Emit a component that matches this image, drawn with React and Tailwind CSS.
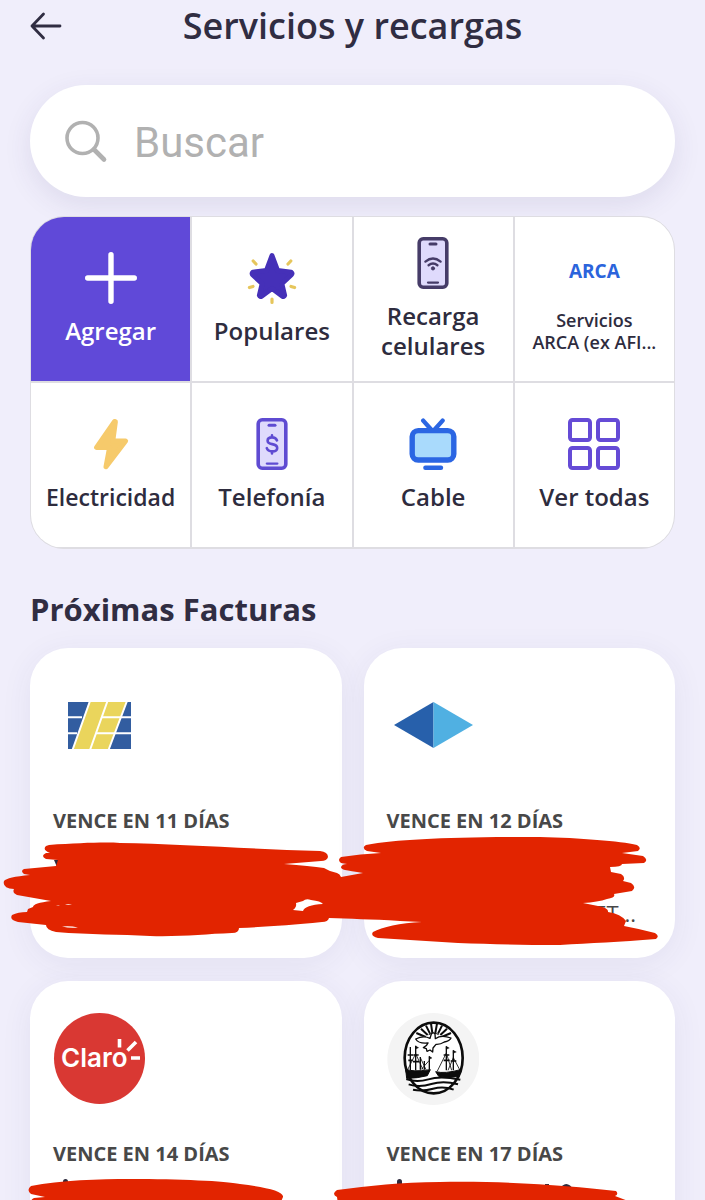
import React, { useState } from "react";

const PlusIcon = () => (
    <svg viewBox="0 0 52 52" className="size-[52px]" fill="none" stroke="#fff" strokeWidth="5.4" strokeLinecap="round">
        <path d="M26 2.7v46.6M2.7 26h46.6" />
    </svg>
);

const StarIcon = () => (
    <svg viewBox="0 0 52 52" className="size-[52px]">
        <path
            d="M26 3.5L31.6 18.6L45.2 20.2Q46.6 21.6 45.2 23L35.8 31.6L38.6 43.4Q38 45 36.4 44.2L26 36.6L15.6 44.2Q14 45 13.4 43.4L16.2 31.6L6.8 23Q5.4 21.6 6.8 20.2L20.4 18.6Z"
            fill="#4530b8"
            stroke="#4530b8"
            strokeWidth="5"
            strokeLinejoin="round"
        />
        <path
            d="M7.2 9l2.8 3M44.8 9l-2.8 3M3.4 35.6l3.6-1.2M48.6 35.6L45 34.4M26 47v3.4"
            fill="none"
            stroke="#e6c65c"
            strokeWidth="3.2"
            strokeLinecap="round"
        />
    </svg>
);

const PhoneWifiIcon = () => (
    <svg viewBox="0 0 52 52" className="size-[52px]" fill="none" stroke="#463c68" strokeLinecap="round">
        <rect x="12.2" y="1.8" width="27.6" height="48.4" rx="4" fill="#dfdafc" strokeWidth="3.6" />
        <path d="M23 7h6" strokeWidth="3" />
        <path d="M21 45.6h10" strokeWidth="2.2" />
        <path d="M18.4 24.6q7.6-6 15.2 0M21.6 28.2q4.4-3.6 8.8 0" strokeWidth="2.4" />
        <circle cx="26" cy="31.4" r="1.6" fill="#463c68" strokeWidth="1" />
    </svg>
);

const PhoneMoneyIcon = () => (
    <svg viewBox="0 0 52 52" className="size-[52px]" fill="none" stroke="#5f4bd2" strokeLinecap="round" strokeLinejoin="round">
        <rect x="12.2" y="1.8" width="27.6" height="48.4" rx="4" fill="#dfdafc" strokeWidth="3.6" />
        <path d="M23 7.2h6" strokeWidth="3" />
        <path d="M20.8 45.6h10.6" strokeWidth="2.2" />
        <path d="M31 22.4q-1.2-3-5-3-4.4 0-4.4 3.3 0 2.6 4.6 3.4 5 .8 5 3.8 0 3.5-5 3.5-4.4 0-5.4-3.2M26 17.4v2M26 33.4v2" strokeWidth="2.6" />
    </svg>
);

const BoltIcon = () => (
    <svg viewBox="0 0 52 52" className="size-[52px]">
        <path
            d="M29.6 3.4L11.6 29.4H24.6L21 48.8L40.6 23H27.8L30.4 3.6Z"
            fill="#f6ca6b"
            stroke="#f6ca6b"
            strokeWidth="5"
            strokeLinejoin="round"
        />
    </svg>
);

const TvIcon = () => (
    <svg viewBox="0 0 52 52" className="size-[52px]" fill="none" stroke="#2b66e3" strokeLinecap="round">
        <path d="M16.2 2.6l8.6 9.6M35.6 2.6L27 12.2" strokeWidth="4.4" />
        <rect x="5.2" y="12.6" width="41.6" height="29.4" rx="6" fill="#a9dafc" strokeWidth="5.4" />
        <path d="M18.4 49.8h15.6" strokeWidth="4.4" />
    </svg>
);

const SquaresIcon = () => (
    <svg viewBox="0 0 52 52" className="size-[52px]" fill="none" stroke="#654bd6" strokeWidth="4">
        <rect x="2" y="2" width="20" height="20" rx="2.5" />
        <rect x="30" y="2" width="20" height="20" rx="2.5" />
        <rect x="2" y="30" width="20" height="20" rx="2.5" />
        <rect x="30" y="30" width="20" height="20" rx="2.5" />
    </svg>
);

const ArcaLogo = () => (
    <span className="flex h-[52px] items-center text-[19px] font-bold text-[#2b64dc]">ARCA</span>
);

const StripesLogo = () => (
    <svg viewBox="0 0 92 92" className="size-[92px]">
        <rect x="15" y="22" width="63" height="47" fill="#325da0" />
        <path d="M36 22h38L56 69H20z" fill="#ead55c" />
        <path d="M15 37.3h14M15 53.3h9M49 37.3h30M43 53.3h36" stroke="#fff" strokeWidth="2" />
        <path
            d="M37 21L19.5 70M54.5 21L37 70M74 21L55.5 70"
            stroke="#fff"
            strokeWidth="2"
            fill="none"
        />
    </svg>
);

const DiamondLogo = () => (
    <svg viewBox="0 0 92 92" className="size-[92px]">
        <path d="M46.5 22L7 45L46.5 68Z" fill="#2760ab" />
        <path d="M46.5 22L86 45L46.5 68Z" fill="#50b0e2" />
    </svg>
);

const ClaroLogo = () => (
    <svg viewBox="0 0 92 92" className="size-[92px]">
        <circle cx="46.5" cy="45.5" r="45.5" fill="#d93833" />
        <text x="8" y="54" fontSize="26" fontWeight="600" fill="#fff" fontFamily="Inter, sans-serif">Claro</text>
        <path d="M66.5 26v8.5M83 29l-8.5 8.5M78 45h9" stroke="#fff" strokeWidth="3.6" fill="none" />
    </svg>
);

const CityLogo = () => (
    <svg viewBox="22 38 276 276" className="size-[92px]" fill="none" stroke="#0c0c0c">
        <circle cx="161" cy="176" r="138" fill="#f4f4f4" stroke="none" />
        <ellipse cx="162" cy="173" rx="87" ry="106" fill="#fff" />
        {/* Sun rays */}
        <path
            d="M124 85l20 19M139 76l12 24M154 70l4 28M172 70l-5 28M187 76l-12 24M202 85l-20 19M110 98l28 12M214 98l-28 12"
            strokeWidth="6"
        />
        <path d="M147 103q15-9 30 0" strokeWidth="3" />
        {/* Dove */}
        <path
            d="M108 116q24-12 43-2l4-13q6-7 11 0l1 14q18-13 47-2q-4 9-20 12q-12 8-25 7l-9 11l-1 12l-8-6l-9 4l-2-8l-9-3q11-5 14-14q-28 3-37-12z"
            fill="#fff"
            strokeWidth="4"
            strokeLinejoin="round"
        />
        {/* Ships */}
        <path d="M78 206q18 10 74 2l-9 18q-30 8-62 8zM168 214q28 7 74-6l-3 20q-28 6-62 0z" fill="#0c0c0c" strokeWidth="3" />
        <path
            d="M92 140v70M108 136v74M122 170v38M134 182v26M149 168v40M200 138v72M221 150v60"
            strokeWidth="4"
        />
        <path d="M108 137l9 5-9 4zM149 168l8 5-8 4zM200 138l9 5-9 4zM221 150l9 5-9 4z" fill="#0c0c0c" strokeWidth="1" />
        <path d="M84 164h16M86 180h13M101 164h16M100 184h18M192 164h17M192 180h18M213 182h17" strokeWidth="5" />
        <path d="M108 160l-24 48M108 160l22 48M122 172l17 36M149 180l-25 28M200 158l-27 54M200 158l16 52M221 172l20 38M221 172l-16 38" strokeWidth="2.5" />
        {/* River */}
        <path
            d="M80 236q30 12 66 1t96 1M87 252q32 10 68-1t80 1M100 268q28 6 60-3t62 3"
            strokeWidth="6"
        />
        <ellipse cx="162" cy="173" rx="87" ry="106" strokeWidth="8" />
    </svg>
);

const services = [
    { label: "Agregar", icon: PlusIcon, active: true },
    { label: "Populares", icon: StarIcon },
    { label: "Recarga\ncelulares", icon: PhoneWifiIcon },
    { label: "Servicios\nARCA (ex AFI...", icon: ArcaLogo, size: "small" },
    { label: "Electricidad", icon: BoltIcon, size: "medium" },
    { label: "Telefonía", icon: PhoneMoneyIcon },
    { label: "Cable", icon: TvIcon },
    { label: "Ver todas", icon: SquaresIcon },
];

const labelSizes = {
    small: "text-[18px] leading-[22px]",
    medium: "text-[23px] leading-[30px]",
    large: "text-[24px] leading-[30px]",
};

const bills = [
    { id: 1, due: "VENCE EN 11 DÍAS", logo: StripesLogo },
    { id: 2, due: "VENCE EN 12 DÍAS", logo: DiamondLogo, detail: "ET..." },
    { id: 3, due: "VENCE EN 14 DÍAS", logo: ClaroLogo },
    { id: 4, due: "VENCE EN 17 DÍAS", logo: CityLogo },
];

const ServiceButton = ({ label, icon: Icon, active, size = "large" }) => (
    <button
        type="button"
        className={`flex min-h-[164px] min-w-0 flex-col items-center justify-center gap-3 ${
            active ? "bg-[#6049d8] text-white" : "bg-white text-[#2e2c3e]"
        }`}
    >
        <Icon />
        <span className={`text-center font-semibold whitespace-pre-line ${labelSizes[size]}`}>
            {label}
        </span>
    </button>
);

const BillCard = ({ due, logo: Logo, detail }) => (
    <article className="h-[310px] rounded-[38px] bg-white px-[23px] pt-8 shadow-[0_6px_32px_rgba(60,50,110,0.07)]">
        <Logo />
        <p className="mt-9 text-[20px] leading-[26px] font-bold text-[#484848]">{due}</p>
        {detail && <p className="mt-16 pr-4 text-right text-[22px] leading-[30px] text-[#484848]">{detail}</p>}
    </article>
);

// Marker strokes that hide the amounts and account holders
const Redactions = () => (
    <svg
        viewBox="0 648 705 552"
        className="pointer-events-none absolute top-0 -left-[30px] w-screen"
        aria-hidden="true"
    >
        <g fill="#2e2c3e">
            <path d="M54 860h6v7h-3z" />
            <rect x="63" y="1179" width="5" height="8" rx="2.5" />
            <rect x="397" y="1179" width="5" height="9" rx="2.5" />
            <path d="M559 1190q7-12 15 0z" />
            <path d="M545 1184h4v4h-4z" />
        </g>
        <g fill="#e22400">
            <path d="M49 845C80 843 105 842 120 843C180 844 250 849 320 851Q328 852 328 857Q327 861 321 861L284 864Q310 866 324 868L330 871L337 873Q340 874 341 877L363 873Q350 871 345 870Q341 869 341 867Q342 864 347 864L341 863Q337 860 341 857Q360 854 381 853L367 851Q361 848 366 845C400 839 450 837 540 837C580 838 620 841 637 845Q642 848 638 851L622 853L643 856Q649 860 644 863L622 864Q622 867 610 867L611 872L621 874Q626 877 623 881L631 883Q637 887 632 891L614 894Q616 898 607 899Q598 902 583 903L598 906Q609 908 608 912Q621 914 626 921L624 926Q640 929 655 933Q660 936 656 939C620 942 590 943 560 945C520 945 490 944 458 943L410 940L378 938Q370 936 373 932C382 927 400 923 422 922L400 921C370 919 350 919 329 918Q328 922 322 922C290 925 265 927 239 928Q239 933 232 933C205 934 180 937 150 936C120 934 90 935 56 932Q46 930 46 925L18 922Q9 920 12 915Q18 912 27 912L28 909L33 907Q33 903 51 901L17 895Q12 893 14 889Q2 888 4 881Q7 877 30 875L24 874Q20 871 24 869L56 866L58 860L46 859Q40 856 46 853L50 853Q42 850 46 846Z" />
            <path d="M31 1186C60 1180 100 1179 130 1179C180 1179 225 1181 240 1184C265 1187 284 1191 283 1197L280 1204H34Q29 1200 34 1198L45 1197L31 1194Q26 1190 31 1186Z" />
            <path d="M337 1190C370 1186 400 1182 440 1182C520 1181 570 1186 616 1191Q619 1194 615 1196L636 1204H338L337 1197Q331 1194 337 1190Z" />
        </g>
        <g fill="#fff">
            <path d="M293 910Q297 907 296 903L303 901Q306 898 311 900Q321 901 323 904Q305 905 303 911Z" />
            <path d="M62 926.5q8-1 16 1q-8 1-16-1zM65 905q3-1.5 7 0zM56 906q2-1 4-.5z" />
        </g>
    </svg>
);

const App = () => {
    const [query, setQuery] = useState("");

    return (
        <main className="h-screen overflow-hidden bg-[#f0eefb] px-[30px] font-['Open_Sans',sans-serif] text-[#302d42]">
            <header className="relative flex h-[52px] items-center justify-center">
                <button type="button" aria-label="Volver" className="absolute left-0">
                    <svg viewBox="0 0 32 28" className="h-7 w-8" fill="none" stroke="#302d42" strokeWidth="2.8" strokeLinecap="round" strokeLinejoin="round">
                        <path d="M30 14H2M13.5 2L2 14L13.5 26" />
                    </svg>
                </button>
                <h1 className="text-[36px] leading-[44px] font-semibold">Servicios y recargas</h1>
            </header>

            <label className="mt-[33px] flex h-28 items-center gap-[26px] rounded-[56px] bg-white pr-10 pl-[34px] shadow-[0_8px_28px_rgba(60,50,110,0.10)]">
                <svg viewBox="0 0 44 44" className="size-11 shrink-0" fill="none" stroke="#b1b1b1" strokeLinecap="round">
                    <circle cx="18.5" cy="19" r="15.5" strokeWidth="3.6" />
                    <path d="M30 30.5L40 40.5" strokeWidth="4.6" />
                </svg>
                <input
                    type="text"
                    aria-label="Buscar"
                    placeholder="Buscar"
                    value={query}
                    onChange={(e) => setQuery(e.target.value)}
                    className="w-full min-w-0 bg-transparent pt-1 font-['Roboto',sans-serif] text-[42px] leading-[52px] outline-none placeholder:text-[#b1b1b1]"
                />
            </label>

            <section className="mt-[19px] grid grid-cols-4 gap-[2px] overflow-hidden rounded-[34px] border border-[#dedde2] bg-[#dedde2] pb-px">
                {services.map((service) => (
                    <ServiceButton key={service.label} {...service} />
                ))}
            </section>

            <h2 className="mt-[39px] text-[31px] leading-[42px] font-bold">Próximas Facturas</h2>

            <section className="relative mt-[18px] grid grid-cols-2 gap-x-[22px] gap-y-[23px]">
                {bills.map((bill) => (
                    <BillCard key={bill.id} {...bill} />
                ))}
                <Redactions />
            </section>
        </main>
    );
};

export default App;
